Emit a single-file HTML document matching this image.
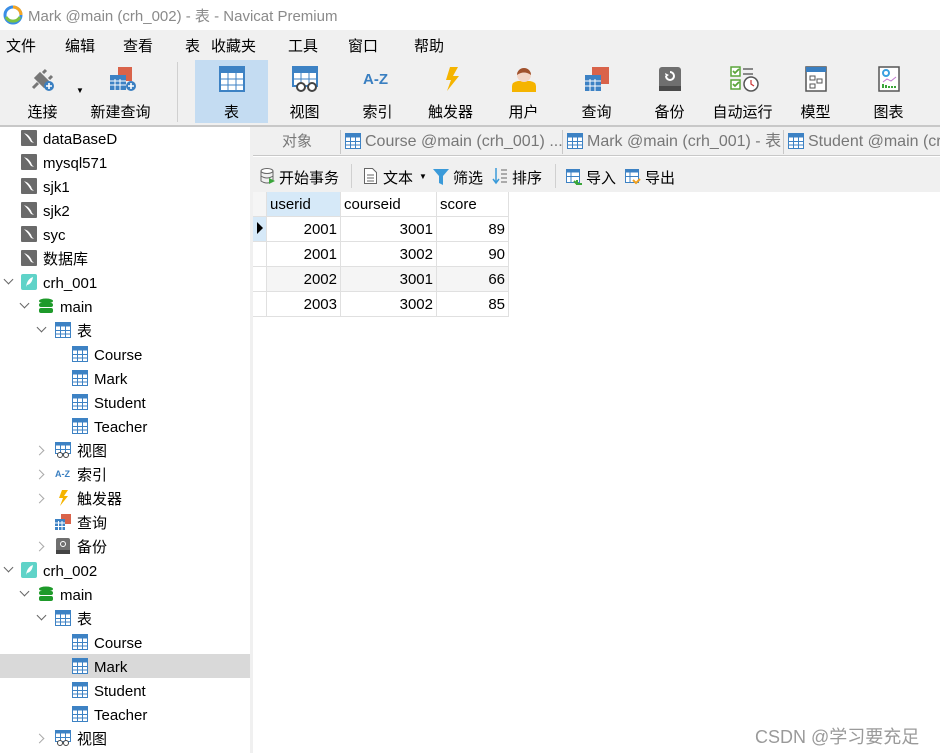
<!DOCTYPE html>
<html><head><meta charset="utf-8">
<style>
*{margin:0;padding:0;box-sizing:border-box}
body{width:940px;height:753px;overflow:hidden;background:#fff;font-family:"Liberation Sans","Noto Sans CJK SC",sans-serif;font-size:15px;color:#000;position:relative}
.a{position:absolute;white-space:nowrap}
.tab{line-height:18px;height:18px}
.tb{position:absolute;top:60px;width:73px;height:63px;text-align:center}
.tb .l{position:absolute;top:41px;left:0;right:0;font-size:15px}
.tb svg{position:absolute;top:6px;left:24px}
.tr{position:absolute;height:24px;line-height:28px;font-size:15px}
.dn,.rt{position:absolute;width:7px;height:7px;border-right:1.5px solid #666;border-bottom:1.5px solid #666}
.dn{transform:rotate(45deg)}
.rt{transform:rotate(-45deg);border-color:#aaa}
.cell{position:absolute;height:25px;line-height:25px;border-right:1px solid #e0e0e0;border-bottom:1px solid #e0e0e0;padding:0 3px;font-size:15px}
</style></head><body>
<svg class="a" style="left:3px;top:5px" width="20" height="20" viewBox="0 0 20 20"><circle cx="10" cy="10" r="8" fill="none" stroke="#3a8ee6" stroke-width="3"/><path d="M3 12a8 8 0 0 0 14 0" fill="none" stroke="#7cc242" stroke-width="3"/><path d="M10 2a8 8 0 0 1 8 8" fill="none" stroke="#f5a623" stroke-width="3"/></svg>
<div class="a" style="left:28px;top:5px;font-size:15px;color:#8a8a8a">Mark @main (crh_002) - 表 - Navicat Premium</div>
<div class="a" style="left:0;top:30px;width:940px;height:96px;background:#f0f0f0"></div>
<div class="a" style="top:35px;left:6px">文件</div>
<div class="a" style="top:35px;left:65px">编辑</div>
<div class="a" style="top:35px;left:123px">查看</div>
<div class="a" style="top:35px;left:185px">表</div>
<div class="a" style="top:35px;left:211px">收藏夹</div>
<div class="a" style="top:35px;left:288px">工具</div>
<div class="a" style="top:35px;left:348px">窗口</div>
<div class="a" style="top:35px;left:414px">帮助</div>
<div class="a" style="left:177px;top:62px;width:1px;height:60px;background:#d0d0d0"></div>
<div class="a" style="left:195px;top:60px;width:73px;height:63px;background:#c4dcf2"></div>
<div class="tb" style="left:6px;width:73px"><svg width="26" height="26" viewBox="0 0 26 26"><path d="M3 22l5-5M6 12l8 8 4-4-8-8zM13 7l3-3M19 13l3-3" stroke="#777" stroke-width="3" fill="#777"/><circle cx="19" cy="20" r="5" fill="#3a7fc1"/><path d="M19 17v6M16 20h6" stroke="#fff" stroke-width="1.6"/></svg><div class="l">连接</div></div>
<div class="a" style="left:76px;top:86px;font-size:8px">▼</div>
<div class="tb" style="left:84px"><svg width="30" height="26" viewBox="0 0 30 26"><rect x="10" y="1" width="14" height="14" fill="#d9634a"/><rect x="2" y="9" width="16" height="15" fill="#3d82c4"/><path d="M2 15h16M2 19h16M7 13v11M12 13v11" stroke="#fff" stroke-width="1"/><circle cx="23" cy="20" r="5" fill="#3a7fc1"/><path d="M23 17v6M20 20h6" stroke="#fff" stroke-width="1.6"/></svg><div class="l">新建查询</div></div>
<div class="tb" style="left:195px"><svg width="26" height="26" viewBox="0 0 26 26"><rect x="1" y="1" width="24" height="24" fill="#fff" stroke="#3d82c4" stroke-width="2"/><rect x="1" y="1" width="24" height="6" fill="#3d82c4"/><path d="M1 13h24M1 19h24M9 7v18M17 7v18" stroke="#3d82c4"/></svg><div class="l">表</div></div>
<div class="tb" style="left:268px"><svg width="28" height="26" viewBox="0 0 28 26"><rect x="1" y="1" width="24" height="19" fill="#fff" stroke="#3d82c4" stroke-width="2"/><rect x="1" y="1" width="24" height="6" fill="#3d82c4"/><path d="M1 13h24M9 7v10M17 7v10" stroke="#3d82c4"/><circle cx="9" cy="21" r="4" fill="#fff" stroke="#444" stroke-width="2"/><circle cx="20" cy="21" r="4" fill="#fff" stroke="#444" stroke-width="2"/></svg><div class="l">视图</div></div>
<div class="tb" style="left:341px"><div class="a" style="left:22px;top:11px;font-weight:bold;color:#3a7fc1;font-size:15px">A-Z</div><div class="l">索引</div></div>
<div class="tb" style="left:414px"><svg width="26" height="26" viewBox="0 0 26 26"><path d="M12 1h8l-5 9h6L9 25l4-11H8z" fill="#f5b400"/></svg><div class="l">触发器</div></div>
<div class="tb" style="left:487px"><svg width="26" height="26" viewBox="0 0 26 26"><path d="M1 26v-6q0-4 6-5h12q6 1 6 5v6z" fill="#f5b400"/><circle cx="13" cy="9" r="7" fill="#f3d6c6"/><path d="M6 9a7 7 0 0 1 14 0q-7-5-14 0" fill="#a0522d"/></svg><div class="l">用户</div></div>
<div class="tb" style="left:560px"><svg width="26" height="26" viewBox="0 0 26 26"><rect x="8" y="1" width="17" height="17" fill="#d9634a"/><rect x="1" y="9" width="16" height="16" fill="#3d82c4"/><path d="M1 15h16M1 20h16M6 13v12M11 13v12" stroke="#fff"/></svg><div class="l">查询</div></div>
<div class="tb" style="left:633px"><svg width="26" height="26" viewBox="0 0 26 26"><rect x="2" y="1" width="22" height="24" rx="3" fill="#6f6f6f"/><rect x="2" y="20" width="22" height="5" fill="#4a4a4a"/><path d="M9 10a4 4 0 1 0 4-4" stroke="#fff" stroke-width="2" fill="none"/><path d="M8 7l1 4 3-2z" fill="#fff"/></svg><div class="l">备份</div></div>
<div class="tb" style="left:706px"><svg width="30" height="26" viewBox="0 0 30 26"><rect x="1" y="1" width="9" height="9" fill="#fff" stroke="#5aa53a" stroke-width="1.5"/><rect x="1" y="14" width="9" height="9" fill="#fff" stroke="#5aa53a" stroke-width="1.5"/><path d="M3 5l2 2 4-4M3 18l2 2 4-4" stroke="#5aa53a" stroke-width="1.8" fill="none"/><path d="M13 3h10M13 8h10" stroke="#888" stroke-width="2"/><circle cx="21" cy="18" r="7" fill="#fff" stroke="#555" stroke-width="1.5"/><path d="M21 14v4l3 2" stroke="#c33" stroke-width="1.2" fill="none"/></svg><div class="l" style="left:-6px;right:-6px">自动运行</div></div>
<div class="tb" style="left:779px"><svg width="26" height="26" viewBox="0 0 26 26"><rect x="3" y="1" width="20" height="24" fill="#fff" stroke="#555" stroke-width="1.5"/><rect x="3" y="1" width="20" height="5" fill="#3a7fc1"/><rect x="7" y="10" width="5" height="4" fill="none" stroke="#555"/><rect x="14" y="13" width="5" height="4" fill="none" stroke="#555"/><rect x="7" y="18" width="5" height="4" fill="none" stroke="#555"/></svg><div class="l">模型</div></div>
<div class="tb" style="left:852px"><svg width="26" height="26" viewBox="0 0 26 26"><rect x="3" y="1" width="20" height="24" fill="#fff" stroke="#555" stroke-width="1.5"/><circle cx="10" cy="7" r="3" fill="none" stroke="#3aa0e0" stroke-width="2"/><path d="M7 16l4-3 4 2 5-4" stroke="#c077d0" fill="none"/><path d="M7 22v-4M10 22v-3M13 22v-2M16 22v-2M19 22v-2" stroke="#3aa53a" stroke-width="2"/></svg><div class="l">图表</div></div>
<div class="a" style="left:0;top:125px;width:940px;height:2px;background:#c8c8c8"></div>
<div class="a" style="left:250px;top:127px;width:3px;height:626px;background:#f0f0f0"></div>
<div class="a" style="left:253px;top:127px;width:687px;height:29px;background:#f0f0f0;border-bottom:1px solid #c8c8c8"></div>
<div class="a tab" style="left:282px;top:133px;color:#777">对象</div>
<div class="a" style="left:340px;top:130px;width:1px;height:24px;background:#c8c8c8"></div>
<div class="a" style="left:562px;top:130px;width:1px;height:24px;background:#c8c8c8"></div>
<div class="a" style="left:783px;top:130px;width:1px;height:24px;background:#c8c8c8"></div>
<svg class="a" style="left:345px;top:133px" width="16" height="16" viewBox="0 0 16 16"><rect x=".5" y=".5" width="15" height="15" fill="#fff" stroke="#3d82c4"/><rect x=".5" y=".5" width="15" height="4" fill="#3d82c4"/><path d="M0 8.5h16M0 12h16M5.5 4v12M10.5 4v12" stroke="#3d82c4"/></svg>
<div class="a tab" style="left:365px;top:133px;color:#777;font-size:16px">Course @main (crh_001) ...</div>
<svg class="a" style="left:567px;top:133px" width="16" height="16" viewBox="0 0 16 16"><rect x=".5" y=".5" width="15" height="15" fill="#fff" stroke="#3d82c4"/><rect x=".5" y=".5" width="15" height="4" fill="#3d82c4"/><path d="M0 8.5h16M0 12h16M5.5 4v12M10.5 4v12" stroke="#3d82c4"/></svg>
<div class="a tab" style="left:587px;top:133px;color:#777;font-size:16px">Mark @main (crh_001) - 表</div>
<svg class="a" style="left:788px;top:133px" width="16" height="16" viewBox="0 0 16 16"><rect x=".5" y=".5" width="15" height="15" fill="#fff" stroke="#3d82c4"/><rect x=".5" y=".5" width="15" height="4" fill="#3d82c4"/><path d="M0 8.5h16M0 12h16M5.5 4v12M10.5 4v12" stroke="#3d82c4"/></svg>
<div class="a tab" style="left:808px;top:133px;color:#777;font-size:16px">Student @main (crh</div>
<div class="a" style="left:253px;top:157px;width:687px;height:35px;background:#f0f0f0"></div>
<svg class="a" style="left:260px;top:168px" width="16" height="17" viewBox="0 0 16 17"><ellipse cx="7" cy="3" rx="6" ry="2.5" fill="#fff" stroke="#666"/><path d="M1 3v10q6 4 12 0V3M1 8q6 4 12 0" fill="none" stroke="#666"/><path d="M9 10l6 3-6 3z" fill="#3aa53a"/></svg>
<div class="a" style="left:279px;top:167px">开始事务</div>
<div class="a" style="left:351px;top:164px;width:1px;height:24px;background:#d0d0d0"></div>
<svg class="a" style="left:364px;top:168px" width="13" height="16" viewBox="0 0 13 16"><path d="M.5.5h8l4 4v11H.5z" fill="#fff" stroke="#666"/><path d="M3 7h7M3 10h7M3 13h7" stroke="#666"/></svg>
<div class="a" style="left:383px;top:167px">文本</div>
<div class="a" style="left:419px;top:172px;font-size:8px">▼</div>
<svg class="a" style="left:433px;top:169px" width="16" height="16" viewBox="0 0 16 16"><path d="M0 0h16l-6 7v9l-4-2V7z" fill="#3a9ad9"/></svg>
<div class="a" style="left:453px;top:167px">筛选</div>
<svg class="a" style="left:492px;top:168px" width="16" height="17" viewBox="0 0 16 17"><path d="M4 0v14M1 11l3 4 3-4" stroke="#3a9ad9" stroke-width="1.5" fill="none"/><path d="M9 2h6M9 6h6M9 10h6M9 14h6" stroke="#666"/></svg>
<div class="a" style="left:512px;top:167px">排序</div>
<div class="a" style="left:555px;top:164px;width:1px;height:24px;background:#d0d0d0"></div>
<svg class="a" style="left:566px;top:169px" width="17" height="16" viewBox="0 0 17 16"><rect x=".5" y=".5" width="13" height="13" fill="#fff" stroke="#3d82c4"/><rect x=".5" y=".5" width="13" height="3" fill="#3d82c4"/><path d="M0 7.5h14M5 3v11" stroke="#3d82c4"/><path d="M16 15h-5v-4M11 15l-3-3" stroke="#3aa53a" stroke-width="2" fill="none"/></svg>
<div class="a" style="left:586px;top:167px">导入</div>
<svg class="a" style="left:625px;top:169px" width="17" height="16" viewBox="0 0 17 16"><rect x=".5" y=".5" width="13" height="13" fill="#fff" stroke="#3d82c4"/><rect x=".5" y=".5" width="13" height="3" fill="#3d82c4"/><path d="M0 7.5h14M5 3v11" stroke="#3d82c4"/><path d="M8 11l3 3 4-4" stroke="#f0a020" stroke-width="2" fill="none"/></svg>
<div class="a" style="left:645px;top:167px">导出</div>
<div class="a" style="left:253px;top:192px;width:14px;height:125px;background:#fff;border-right:1px solid #e0e0e0"></div>
<div class="cell" style="left:253px;top:192px;width:14px;height:25px;background:#f5f5f5"></div>
<div class="cell" style="left:267px;top:192px;width:74px;background:#d6e9f8;line-height:26px">userid</div>
<div class="cell" style="left:341px;top:192px;width:96px;line-height:26px">courseid</div>
<div class="cell" style="left:437px;top:192px;width:72px;line-height:26px">score</div>
<div class="cell" style="left:253px;top:217px;width:14px;background:#d6e9f8"></div>
<div class="a" style="left:257px;top:222px;width:0;height:0;border-left:6px solid #000;border-top:6px solid transparent;border-bottom:6px solid transparent"></div>
<div class="cell" style="left:253px;top:242px;width:14px"></div>
<div class="cell" style="left:253px;top:267px;width:14px"></div>
<div class="cell" style="left:253px;top:292px;width:14px"></div>
<div class="cell" style="left:267px;top:217px;width:74px;text-align:right">2001</div><div class="cell" style="left:341px;top:217px;width:96px;text-align:right">3001</div><div class="cell" style="left:437px;top:217px;width:72px;text-align:right">89</div>
<div class="cell" style="left:267px;top:242px;width:74px;text-align:right">2001</div><div class="cell" style="left:341px;top:242px;width:96px;text-align:right">3002</div><div class="cell" style="left:437px;top:242px;width:72px;text-align:right">90</div>
<div class="cell" style="left:267px;top:267px;width:74px;text-align:right;background:#f5f5f5">2002</div><div class="cell" style="left:341px;top:267px;width:96px;text-align:right;background:#f5f5f5">3001</div><div class="cell" style="left:437px;top:267px;width:72px;text-align:right;background:#f5f5f5">66</div>
<div class="cell" style="left:267px;top:292px;width:74px;text-align:right">2003</div><div class="cell" style="left:341px;top:292px;width:96px;text-align:right">3002</div><div class="cell" style="left:437px;top:292px;width:72px;text-align:right">85</div>
<div class="a" style="left:0;top:654px;width:250px;height:24px;background:#d9d9d9"></div>
<svg width="0" height="0" style="position:absolute"><defs>
<symbol id="my" viewBox="0 0 16 16"><rect width="16" height="16" rx="1" fill="#6a6a6a"/><path d="M3 3q6 2 8 8l2 2-3-1q-3-5-7-9z" fill="#fff"/></symbol>
<symbol id="sq" viewBox="0 0 16 16"><rect width="16" height="16" rx="2" fill="#5fd3c8"/><path d="M5 13q1-8 7-10q-1 7-6 8" fill="#fff"/></symbol>
<symbol id="db" viewBox="0 0 16 16"><ellipse cx="8" cy="3" rx="7" ry="2.5" fill="#1e9a2a"/><rect x="1" y="5" width="14" height="4" rx="2" fill="#1e9a2a"/><rect x="1" y="10" width="14" height="5" rx="2" fill="#1e9a2a"/></symbol>
<symbol id="tb" viewBox="0 0 16 16"><rect x=".5" y=".5" width="15" height="15" fill="#fff" stroke="#3d82c4"/><rect x=".5" y=".5" width="15" height="4" fill="#3d82c4"/><path d="M0 8.5h16M0 12h16M5.5 4v12M10.5 4v12" stroke="#3d82c4"/></symbol>
<symbol id="vw" viewBox="0 0 16 16"><rect x=".5" y=".5" width="15" height="11" fill="#fff" stroke="#3d82c4"/><rect x=".5" y=".5" width="15" height="3" fill="#3d82c4"/><path d="M5.5 3v8M10.5 3v8M0 7.5h16" stroke="#3d82c4"/><circle cx="5" cy="13" r="2.5" fill="#fff" stroke="#444"/><circle cx="11" cy="13" r="2.5" fill="#fff" stroke="#444"/></symbol>
<symbol id="qr" viewBox="0 0 16 16"><rect x="6" y="0" width="10" height="10" fill="#d9634a"/><rect x="0" y="5" width="10" height="11" fill="#3d82c4"/><path d="M0 9h10M0 12.5h10M3.5 7v9M7 7v9" stroke="#fff"/></symbol>
<symbol id="bk" viewBox="0 0 16 16"><rect x="1" y="0" width="14" height="16" rx="2" fill="#6f6f6f"/><rect x="1" y="12" width="14" height="4" fill="#444"/><circle cx="8" cy="6" r="2.5" fill="none" stroke="#fff"/></symbol>
<symbol id="tg" viewBox="0 0 16 16"><path d="M7 0h6l-4 6h4L5 16l3-8H4z" fill="#f5b400"/></symbol>
</defs></svg>
<svg class="a" style="left:21px;top:130px" width="16" height="16"><use href="#my"/></svg><div class="tr" style="left:43px;top:126px">dataBaseD</div>
<svg class="a" style="left:21px;top:154px" width="16" height="16"><use href="#my"/></svg><div class="tr" style="left:43px;top:150px">mysql571</div>
<svg class="a" style="left:21px;top:178px" width="16" height="16"><use href="#my"/></svg><div class="tr" style="left:43px;top:174px">sjk1</div>
<svg class="a" style="left:21px;top:202px" width="16" height="16"><use href="#my"/></svg><div class="tr" style="left:43px;top:198px">sjk2</div>
<svg class="a" style="left:21px;top:226px" width="16" height="16"><use href="#my"/></svg><div class="tr" style="left:43px;top:222px">syc</div>
<svg class="a" style="left:21px;top:250px" width="16" height="16"><use href="#my"/></svg><div class="tr" style="left:43px;top:246px">数据库</div>
<div class="dn" style="left:5px;top:276px"></div>
<svg class="a" style="left:21px;top:274px" width="16" height="16"><use href="#sq"/></svg><div class="tr" style="left:43px;top:270px">crh_001</div>
<div class="dn" style="left:21px;top:300px"></div>
<svg class="a" style="left:38px;top:298px" width="16" height="16"><use href="#db"/></svg><div class="tr" style="left:60px;top:294px">main</div>
<div class="dn" style="left:38px;top:324px"></div>
<svg class="a" style="left:55px;top:322px" width="16" height="16"><use href="#tb"/></svg><div class="tr" style="left:77px;top:318px">表</div>
<svg class="a" style="left:72px;top:346px" width="16" height="16"><use href="#tb"/></svg><div class="tr" style="left:94px;top:342px">Course</div>
<svg class="a" style="left:72px;top:370px" width="16" height="16"><use href="#tb"/></svg><div class="tr" style="left:94px;top:366px">Mark</div>
<svg class="a" style="left:72px;top:394px" width="16" height="16"><use href="#tb"/></svg><div class="tr" style="left:94px;top:390px">Student</div>
<svg class="a" style="left:72px;top:418px" width="16" height="16"><use href="#tb"/></svg><div class="tr" style="left:94px;top:414px">Teacher</div>
<div class="rt" style="left:36px;top:447px"></div>
<svg class="a" style="left:55px;top:442px" width="16" height="16"><use href="#vw"/></svg><div class="tr" style="left:77px;top:438px">视图</div>
<div class="rt" style="left:36px;top:471px"></div>
<div class="a" style="left:55px;top:469px;font-size:9px;font-weight:bold;color:#3a7fc1">A-Z</div><div class="tr" style="left:77px;top:462px">索引</div>
<div class="rt" style="left:36px;top:495px"></div>
<svg class="a" style="left:55px;top:490px" width="16" height="16"><use href="#tg"/></svg><div class="tr" style="left:77px;top:486px">触发器</div>
<svg class="a" style="left:55px;top:514px" width="16" height="16"><use href="#qr"/></svg><div class="tr" style="left:77px;top:510px">查询</div>
<div class="rt" style="left:36px;top:543px"></div>
<svg class="a" style="left:55px;top:538px" width="16" height="16"><use href="#bk"/></svg><div class="tr" style="left:77px;top:534px">备份</div>
<div class="dn" style="left:5px;top:564px"></div>
<svg class="a" style="left:21px;top:562px" width="16" height="16"><use href="#sq"/></svg><div class="tr" style="left:43px;top:558px">crh_002</div>
<div class="dn" style="left:21px;top:588px"></div>
<svg class="a" style="left:38px;top:586px" width="16" height="16"><use href="#db"/></svg><div class="tr" style="left:60px;top:582px">main</div>
<div class="dn" style="left:38px;top:612px"></div>
<svg class="a" style="left:55px;top:610px" width="16" height="16"><use href="#tb"/></svg><div class="tr" style="left:77px;top:606px">表</div>
<svg class="a" style="left:72px;top:634px" width="16" height="16"><use href="#tb"/></svg><div class="tr" style="left:94px;top:630px">Course</div>
<svg class="a" style="left:72px;top:658px" width="16" height="16"><use href="#tb"/></svg><div class="tr" style="left:94px;top:654px">Mark</div>
<svg class="a" style="left:72px;top:682px" width="16" height="16"><use href="#tb"/></svg><div class="tr" style="left:94px;top:678px">Student</div>
<svg class="a" style="left:72px;top:706px" width="16" height="16"><use href="#tb"/></svg><div class="tr" style="left:94px;top:702px">Teacher</div>
<div class="rt" style="left:36px;top:735px"></div>
<svg class="a" style="left:55px;top:730px" width="16" height="16"><use href="#vw"/></svg><div class="tr" style="left:77px;top:726px">视图</div>
<div class="a" style="left:755px;top:723px;font-size:18px;color:#9a9a9a">CSDN @学习要充足</div>
</body></html>
